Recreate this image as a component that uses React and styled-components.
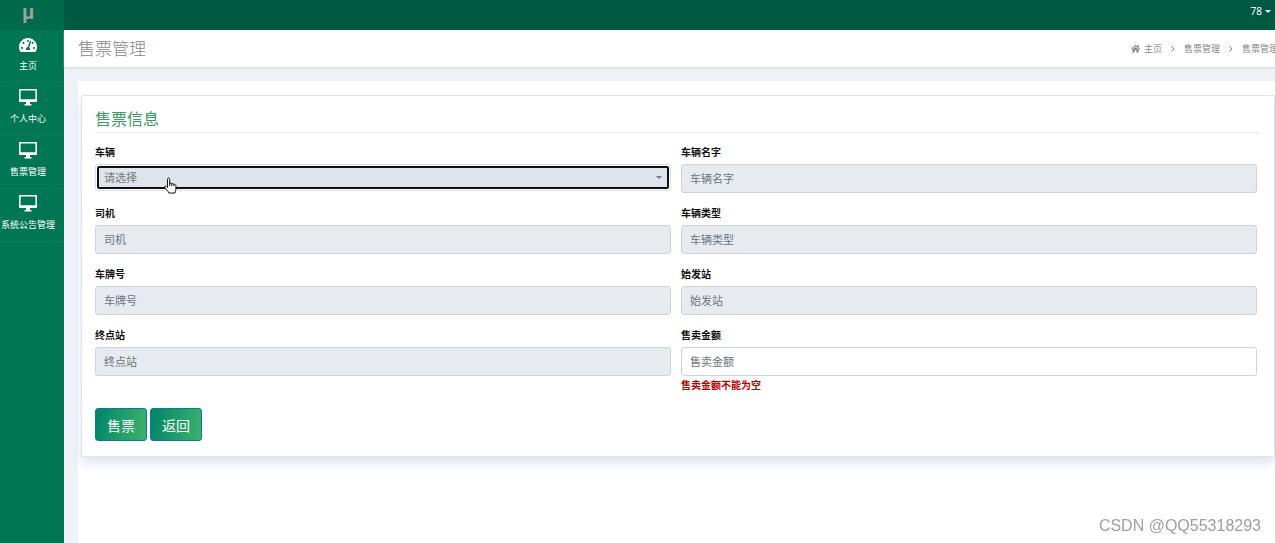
import React, { useState } from 'react';
import styled, { createGlobalStyle } from 'styled-components';
import { FaTachometerAlt } from 'react-icons/fa';

const GlobalStyle = createGlobalStyle`
  * {
    box-sizing: border-box;
  }

  body {
    margin: 0;
    overflow: hidden;
    background: #eff1f7;
    color: #111;
    font-family: "Noto Sans", "Noto Sans CJK SC", sans-serif;
    font-size: 10px;
  }

  button, input, select {
    font-family: inherit;
  }
`;

const Layout = styled.div`
  display: flex;
  min-height: 100vh;
`;

const Sidebar = styled.aside`
  flex: 0 0 64px;
  background: #007652;
`;

const Logo = styled.a`
  display: block;
  height: 30px;
  padding-right: 8px;
  background: #006a4b;
  color: #9da5a0;
  font-family: "Liberation Sans", sans-serif;
  font-size: 20px;
  font-weight: 700;
  line-height: 24px;
  text-align: center;
  text-decoration: none;
`;

const NavLink = styled.a`
  display: flex;
  flex-direction: column;
  align-items: center;
  gap: 4px;
  height: 53px;
  padding: 6px 8px 0 0;
  border-bottom: 1px solid #087d5a;
  color: #fff;
  font-size: 9px;
  line-height: 16px;
  white-space: nowrap;
  text-decoration: none;

  svg {
    flex: none;
    display: block;
  }
`;

const Main = styled.main`
  flex: 1;
  display: flex;
  flex-direction: column;
  min-width: 0;
`;

const TopBar = styled.header`
  display: flex;
  justify-content: flex-end;
  height: 30px;
  padding: 0 4px;
  background: #005a41;
`;

const UserButton = styled.button`
  display: flex;
  align-items: center;
  gap: 3px;
  height: 22px;
  padding: 0;
  border: none;
  background: none;
  color: #fff;
  font-size: 10px;
`;

const Caret = styled.span`
  border: 3px solid transparent;
  border-top-color: currentColor;
  border-bottom: none;
`;

const TitleBar = styled.div`
  display: flex;
  justify-content: space-between;
  align-items: center;
  height: 38px;
  padding-left: 14px;
  border-bottom: 1px solid #dfe0e8;
  background: #fff;
  box-shadow: 0 1px 1px #e6e8ef;
`;

const PageTitle = styled.h1`
  margin: 0;
  color: #888;
  font-size: 17px;
  font-weight: 300;
  line-height: 24px;
`;

const Breadcrumb = styled.nav`
  display: flex;
  align-items: center;
  gap: 7px;
  margin-right: -3px;
  color: #888;
  font-size: 9px;
  white-space: nowrap;

  a {
    display: flex;
    align-items: center;
    gap: 4px;
    color: inherit;
    text-decoration: none;
  }
`;

const Content = styled.div`
  flex: 1;
  margin: 13px 0 0 14px;
  padding: 14px 0 0 3px;
  background: #fff;
`;

const Card = styled.section`
  padding: 11px 14px 15px 13px;
  border: 1px solid #dfe2ec;
  border-radius: 2px;
  background: #fff;
  box-shadow: 0 6px 12px #dfe3f1;
`;

const CardTitle = styled.h2`
  margin: 0 0 11px;
  padding-bottom: 1px;
  border-bottom: 1px solid #e9ebee;
  color: #3c9c66;
  font-size: 16px;
  font-weight: 400;
  line-height: 24px;
`;

const Fields = styled.div`
  display: grid;
  grid-template-columns: 1fr 1fr;
  column-gap: 10px;
  padding-right: 3px;
`;

const Field = styled.div`
  min-height: 61px;
`;

const Label = styled.label`
  display: block;
  height: 20px;
  font-size: 10px;
  font-weight: 700;
  line-height: 16px;
`;

const Input = styled.input`
  display: block;
  width: 100%;
  height: 29px;
  padding: 0 8px;
  border: 1px solid #ced4da;
  border-radius: 3px;
  background: #fff;
  color: #495057;
  font-size: 11px;

  &:disabled {
    background: #e7eaef;
  }

  &::placeholder {
    color: #6c757d;
    opacity: 1;
  }
`;

const SelectWrap = styled.div`
  position: relative;
  padding: 2px;
  border: 1px solid #dcdfe5;
  border-radius: 3px;
  color: #777;

  ${Caret} {
    position: absolute;
    top: 11px;
    right: 8px;
    pointer-events: none;
  }
`;

const Select = styled.select`
  display: block;
  width: 100%;
  height: 21px;
  padding: 0 6px;
  border: none;
  border-radius: 1px;
  outline: 2px solid #101010;
  outline-offset: -1px;
  appearance: none;
  background: #dfe3eb;
  color: #777;
  font-size: 11px;
`;

const Pointer = styled.svg`
  position: absolute;
  top: 12px;
  left: 68px;
  pointer-events: none;
`;

const FieldError = styled.div`
  padding-top: 1px;
  color: #c00000;
  font-size: 10px;
  font-weight: 700;
  line-height: 16px;
`;

const Actions = styled.div`
  display: flex;
  gap: 3px;
  padding-top: 15px;
`;

const ActionButton = styled.button`
  height: 33px;
  padding: 0 11px;
  border: 1px solid #0878a4;
  border-radius: 3px;
  background: linear-gradient(100deg, #008565, #3cb26c);
  color: #fff;
  font-size: 14px;
`;

const Watermark = styled.div`
  position: fixed;
  right: 14px;
  bottom: 7px;
  color: #a0a0a0;
  font-family: "Liberation Sans", sans-serif;
  font-size: 16px;
  line-height: 20px;
`;

const MonitorIcon = () => (
  <svg width="20" height="18" viewBox="0 0 20 18" aria-hidden="true">
    <path
      fill="#fff"
      fillRule="evenodd"
      d="M1.8 0h16.4a.8.8 0 0 1 .8.8v11.4a.8.8 0 0 1-.8.8H12v2h1.5v1.5h-7V15H8v-2H1.8a.8.8 0 0 1-.8-.8V.8A.8.8 0 0 1 1.8 0zM2.6 1.5v8.7h14.8V1.5z"
    />
  </svg>
);

const HomeIcon = () => (
  <svg width="9" height="9" viewBox="0 0 18 18" aria-hidden="true">
    <path
      fill="currentColor"
      d="M9 1.5 13 5V2h2.5v5.2L18 9.4l-1.2 1.4L9 4.2l-7.8 6.6L0 9.4zM9 5.8l6.3 5.3V17h-4.5v-4.5H7.2V17H2.7v-5.9z"
    />
  </svg>
);

const ChevronIcon = () => (
  <svg width="8" height="8" viewBox="0 0 8 8" aria-hidden="true">
    <path d="M2.5 1.5 5 4 2.5 6.5" fill="none" stroke="currentColor" />
  </svg>
);

const HandPointer = () => (
  <Pointer width="13" height="18" viewBox="0 0 13 18" aria-hidden="true">
    <path
      d="M3.5 10.5v-8c0-2 2.2-2 2.2 0v4c.8-.9 2-.6 2.1.4.9-.7 1.9-.3 2 .6.9-.6 2.1 0 2.1 1.2v3.6c0 1-.9 1.6-.9 3.7H4.8C4.5 14 1.9 12.6.9 10.5c-.6-1.4.8-1.9 1.6-1z"
      fill="#fff"
      stroke="#111"
    />
    <path d="M5.7 6v3M7.8 7v2M9.8 7.5V9" stroke="#111" fill="none" />
  </Pointer>
);

const menu = [
  { text: '主页', icon: <FaTachometerAlt size={18} /> },
  { text: '个人中心', icon: <MonitorIcon /> },
  { text: '售票管理', icon: <MonitorIcon /> },
  { text: '系统公告管理', icon: <MonitorIcon /> },
];

const readOnlyFields = [
  { id: 'name', text: '车辆名字' },
  { id: 'driver', text: '司机' },
  { id: 'type', text: '车辆类型' },
  { id: 'plate', text: '车牌号' },
  { id: 'from', text: '始发站' },
  { id: 'to', text: '终点站' },
];

const App = () => {
  const [amount, setAmount] = useState('');

  return (
    <>
      <GlobalStyle />
      <Layout>
        <Sidebar>
          <Logo href="#">μ</Logo>
          <nav>
            {menu.map(item => (
              <NavLink href="#" key={item.text}>
                {item.icon}
                {item.text}
              </NavLink>
            ))}
          </nav>
        </Sidebar>
        <Main>
          <TopBar>
            <UserButton type="button">
              78
              <Caret />
            </UserButton>
          </TopBar>
          <TitleBar>
            <PageTitle>售票管理</PageTitle>
            <Breadcrumb>
              <a href="#"><HomeIcon />主页</a>
              <ChevronIcon />
              <a href="#">售票管理</a>
              <ChevronIcon />
              <span>售票管理</span>
            </Breadcrumb>
          </TitleBar>
          <Content>
            <Card>
              <CardTitle>售票信息</CardTitle>
              <form onSubmit={e => e.preventDefault()}>
                <Fields>
                  <Field>
                    <Label htmlFor="vehicle">车辆</Label>
                    <SelectWrap>
                      <Select id="vehicle">
                        <option>请选择</option>
                      </Select>
                      <Caret />
                      <HandPointer />
                    </SelectWrap>
                  </Field>
                  {readOnlyFields.map(({ id, text }) => (
                    <Field key={id}>
                      <Label htmlFor={id}>{text}</Label>
                      <Input id={id} placeholder={text} disabled />
                    </Field>
                  ))}
                  <Field>
                    <Label htmlFor="amount">售卖金额</Label>
                    <Input
                      id="amount"
                      placeholder="售卖金额"
                      value={amount}
                      onChange={e => setAmount(e.target.value)}
                    />
                    {!amount && <FieldError>售卖金额不能为空</FieldError>}
                  </Field>
                </Fields>
                <Actions>
                  <ActionButton type="submit">售票</ActionButton>
                  <ActionButton type="button">返回</ActionButton>
                </Actions>
              </form>
            </Card>
          </Content>
        </Main>
      </Layout>
      <Watermark>CSDN @QQ55318293</Watermark>
    </>
  );
};

export default App;
